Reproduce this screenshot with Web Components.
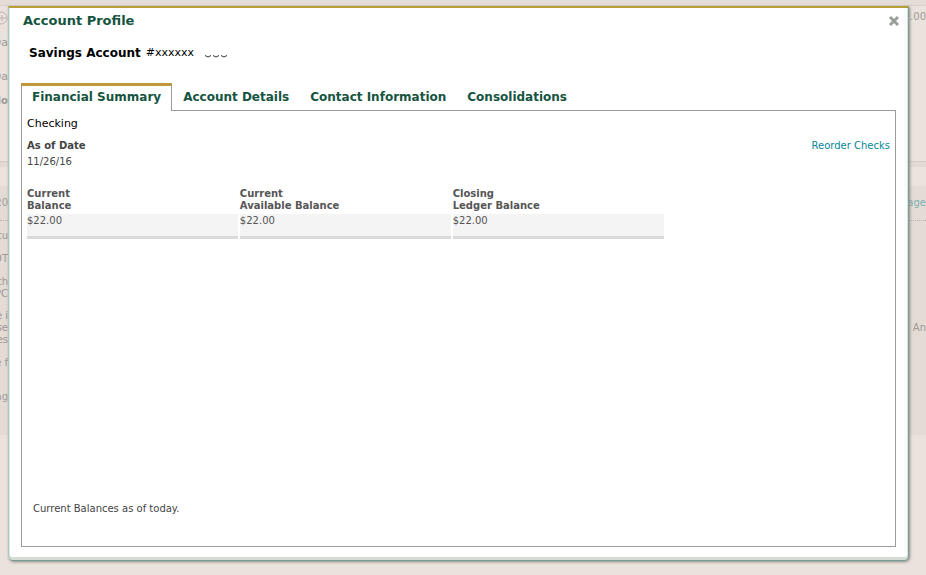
<!DOCTYPE html>
<html lang="en">
<head>
<meta charset="utf-8">
<title>Account Profile</title>
<style>
body { margin: 0; font-family: Verdana, "DejaVu Sans", sans-serif; background: #eae2dd; }
</style>
</head>
<body>
<account-screen></account-screen>
<script>
function define(name, html, setup) {
  customElements.define(name, class extends HTMLElement {
    constructor() {
      super();
      const root = this.attachShadow({ mode: 'open' });
      root.innerHTML = html;
      if (setup) setup(this, root);
    }
  });
}

/* One line of the dimmed page: text cut by the dialog's left and right edges. */
define('dimmed-row', `
<style>
:host { display: flex; justify-content: space-between; font-size: 10px; line-height: 12px; color: #9f9894; white-space: nowrap; }
span { display: flex; width: 8px; justify-content: flex-end; }
span:last-child { width: 24px; }
::slotted(*) { flex: none; }
:host([large]) { font-size: 11px; }
:host([strong]) { font-weight: bold; }
</style>
<span><slot name="left"></slot></span><span><slot name="right"></slot></span>`);

define('dimmed-page', `
<style>
:host { display: block; overflow: hidden; }
.bar { height: 5px; background: #e4dcd7; border-bottom: 1px solid #d8d0cb; }
.top { height: 155px; border-bottom: 1px solid #d2cac5; display: flow-root; background: #eae2dd; }
.gap { height: 24px; background: #ebe3dd; border-top: 5px solid #e3dad4; box-sizing: border-box; }
.body { height: 249px; background: #e4dbd5; display: flow-root; }
.dots { border-top: 1px dotted #b9b1ac; margin-top: 11px; height: 9px; }
.ring { fill: none; stroke: #bab3af; }
.link { color: #7fb0b1; }
.s1 { margin-top: 11px; } .s2 { margin-top: 10px; } .s3 { margin-top: 22px; } .s4 { margin-top: 12px; } .s5 { margin-top: 5px; }
</style>
<div class="bar"></div>
<div class="top">
  <dimmed-row class="s5"><svg slot="left" width="14" height="14"><g class="ring"><circle cx="7" cy="7" r="6"/><path d="M4 7h8M8 4v6"/></g></svg><span slot="right">2.00</span></dimmed-row>
  <dimmed-row class="s4" large><span slot="left">Da</span></dimmed-row>
  <dimmed-row class="s3" large><span slot="left">Da</span></dimmed-row>
  <dimmed-row class="s4" strong><span slot="left">No</span></dimmed-row>
</div>
<div class="gap"></div>
<div class="body">
  <dimmed-row class="s1"><span slot="left">20</span><span slot="right" class="link">age</span></dimmed-row>
  <div class="dots"></div>
  <dimmed-row><span slot="left">cu</span></dimmed-row>
  <dimmed-row class="s1"><span slot="left">OT</span></dimmed-row>
  <dimmed-row class="s1"><span slot="left">rth</span></dimmed-row>
  <dimmed-row><span slot="left">PC</span></dimmed-row>
  <dimmed-row class="s2"><span slot="left">e i</span></dimmed-row>
  <dimmed-row><span slot="left">se</span><span slot="right">An</span></dimmed-row>
  <dimmed-row><span slot="left">es</span></dimmed-row>
  <dimmed-row class="s1"><span slot="left">e f</span></dimmed-row>
  <dimmed-row class="s3"><span slot="left">ag</span></dimmed-row>
</div>`);

define('profile-dialog', `
<style>
:host { display: flex; flex-direction: column; box-sizing: border-box; background: #fff;
  border: 1px solid #76a09b; border-left-color: #a9c7c5; border-top: 2px solid #b79f38; border-bottom-color: #719b94; border-radius: 0 0 5px 5px;
  box-shadow: inset 0 -3px 0 #d5dbd5, inset -1px 0 0 #dae3dd, inset 1px 0 0 #e3e9e4, 1px 1px 3px 0 #8c8580; padding: 0 12px 13px; }
header { display: flex; justify-content: space-between; align-items: center; height: 25px; padding-left: 2px; margin-right: -4px; }
h1 { margin: 0; font-size: 13px; line-height: 16px; color: #155440; }
button { border: 0; padding: 0; background: none; display: flex; }
</style>
<header><h1>Account Profile</h1>
<button type="button" aria-label="Close"><svg width="12" height="12" viewBox="0 0 12 12"><path d="M2 2l8 8M10 2l-8 8" stroke="#999f9a" stroke-width="3"/></svg></button></header>
<slot></slot>`);

define('account-name', `
<style>
:host { display: flex; align-items: center; gap: 5px; padding: 12px 8px 0; font-size: 12px; line-height: 16px; color: #000; }
.number { display: flex; align-items: center; font-size: 11px; }
svg { margin-left: 10px; }
</style>
<strong><slot></slot></strong>
<span class="number"><span><slot name="number"></slot></span><svg width="23" height="16" fill="none" stroke="#333"><path d="M1 10.5q3 3 6 0M9 10.5q3 3 6 0M17 10.5q3 3 6 0"/></svg></span>`);

define('profile-tab', `
<style>
:host { display: block; }
button { font: bold 12px/16px Verdana, "DejaVu Sans", sans-serif; color: #155440; background: none; border: 0; padding: 6px 10px 5px; white-space: nowrap; display: block; }
:host([selected]) button { background: #fff; border: 1px solid #9b9b9b; border-top: 3px solid #be993b; border-bottom: 0; padding: 3px 10px 6px; margin-bottom: -1px; }
</style>
<button type="button" role="tab"><slot></slot></button>`, (host, root) => {
  root.querySelector('button').setAttribute('aria-selected', host.hasAttribute('selected'));
});

define('profile-tabs', `
<style>
:host { display: flex; flex-direction: column; flex: 1; padding-top: 22px; }
nav { display: flex; align-items: flex-end; gap: 1px; position: relative; z-index: 1; }
section { flex: 1; display: flex; flex-direction: column; border: 1px solid #9b9b9b; padding: 5px 5px 29px; }
</style>
<nav role="tablist"><slot name="tab"></slot></nav>
<section role="tabpanel"><slot></slot></section>`);

define('financial-summary', `
<style>
:host { display: flex; flex-direction: column; flex: 1; font-size: 10px; line-height: 16px; color: #444; }
h2 { margin: 0 0 6px; font-weight: normal; font-size: 11px; line-height: 16px; color: #000; }
.date { display: flex; justify-content: space-between; margin-bottom: 18px; }
a { color: #08869a; text-decoration: none; }
p { margin: auto 6px 0; }
</style>
<h2>Checking</h2>
<div class="date"><div><strong>As of Date</strong><br>11/26/16</div><a href="#reorder">Reorder Checks</a></div>
<balance-table></balance-table>
<p>Current Balances as of today.</p>`);

define('balance-table', `
<style>
:host { display: block; color: #555; }
table { width: 74%; table-layout: fixed; border-collapse: collapse; }
th { text-align: left; vertical-align: bottom; font-size: 10px; line-height: 12px; padding: 0 0 2px; }
td { font-size: 10px; line-height: 14px; padding: 0 2px 0 0; }
div { background: #f4f4f4; border-bottom: 3px solid #dadada; padding-bottom: 8px; }
</style>
<table>
<thead><tr><th>Current<br>Balance</th><th>Current<br>Available Balance</th><th>Closing<br>Ledger Balance</th></tr></thead>
<tbody><tr><td><div>$22.00</div></td><td><div>$22.00</div></td><td><div>$22.00</div></td></tr></tbody>
</table>`);

define('account-screen', `
<style>
:host { display: grid; min-height: 100vh; }
dimmed-page, profile-dialog { grid-area: 1 / 1; min-width: 0; }
profile-dialog { margin: 6px 17px 14px 8px; z-index: 1; }
</style>
<dimmed-page aria-hidden="true"></dimmed-page>
<profile-dialog role="dialog" aria-label="Account Profile">
  <account-name>Savings Account<span slot="number">#xxxxxx</span></account-name>
  <profile-tabs>
    <profile-tab slot="tab" selected>Financial Summary</profile-tab>
    <profile-tab slot="tab">Account Details</profile-tab>
    <profile-tab slot="tab">Contact Information</profile-tab>
    <profile-tab slot="tab">Consolidations</profile-tab>
    <financial-summary></financial-summary>
  </profile-tabs>
</profile-dialog>`);
</script>
</body>
</html>
